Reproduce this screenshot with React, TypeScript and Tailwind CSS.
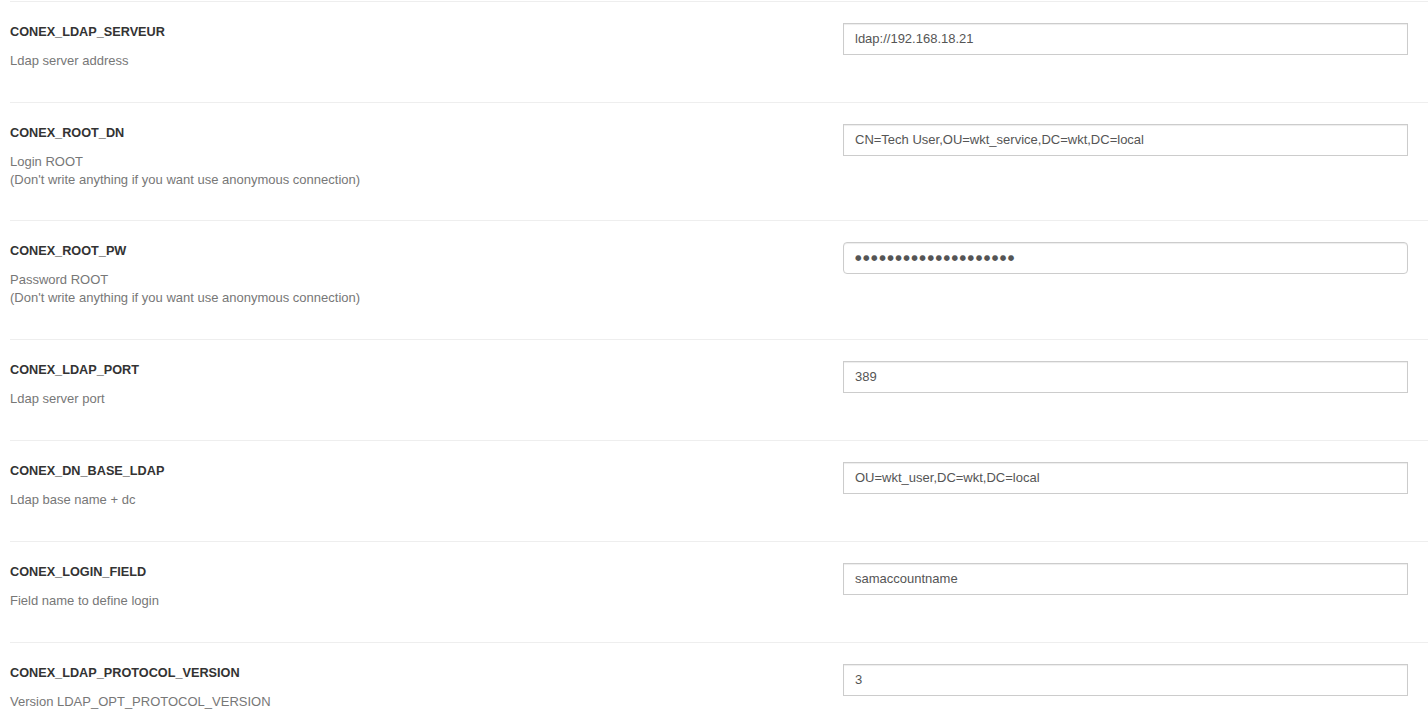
import React from "react";

type Row = {
  name: string;
  desc: string[];
  value: string;
  password?: boolean;
  pb: string;
};

const rows: Row[] = [
  { name: "CONEX_LDAP_SERVEUR", desc: ["Ldap server address"], value: "ldap://192.168.18.21", pb: "pb-[32px]" },
  {
    name: "CONEX_ROOT_DN",
    desc: ["Login ROOT", "(Don't write anything if you want use anonymous connection)"],
    value: "CN=Tech User,OU=wkt_service,DC=wkt,DC=local",
    pb: "pb-[31px]",
  },
  {
    name: "CONEX_ROOT_PW",
    desc: ["Password ROOT", "(Don't write anything if you want use anonymous connection)"],
    value: "●●●●●●●●●●●●●●●●●●●●",
    password: true,
    pb: "pb-[32px]",
  },
  { name: "CONEX_LDAP_PORT", desc: ["Ldap server port"], value: "389", pb: "pb-[32px]" },
  { name: "CONEX_DN_BASE_LDAP", desc: ["Ldap base name + dc"], value: "OU=wkt_user,DC=wkt,DC=local", pb: "pb-[32px]" },
  { name: "CONEX_LOGIN_FIELD", desc: ["Field name to define login"], value: "samaccountname", pb: "pb-[32px]" },
  {
    name: "CONEX_LDAP_PROTOCOL_VERSION",
    desc: ["Version LDAP_OPT_PROTOCOL_VERSION"],
    value: "3",
    pb: "pb-[32px]",
  },
];

export default function App() {
  return (
    <div
      className="w-[1428px] h-[712px] overflow-hidden bg-white pt-px pl-[10px]"
      style={{ fontFamily: '"Liberation Sans", Arial, sans-serif' }}
    >
      {rows.map((r) => (
        <div
          key={r.name}
          className={`grid grid-cols-[833px_1fr] border-t border-[#eeeeee] pt-[20px] ${r.pb}`}
        >
          <div>
            <div className="text-[12.7px] leading-[20px] font-bold text-[#333333]">{r.name}</div>
            <div className="mt-[10px] text-[13px] leading-[18px] text-[#777777]">
              {r.desc.map((d) => (
                <div key={d}>{d}</div>
              ))}
            </div>
          </div>
          <div className="pr-[20px] pt-px">
            <input
              readOnly
              type="text"
              defaultValue={r.value}
              className={`block w-full h-[32px] border border-[#cccccc] bg-white px-[11px] pt-0 pb-[2px] text-[#555555] shadow-[inset_0_1px_1px_rgba(0,0,0,0.075)] outline-none ${
                r.password
                  ? "rounded-[4px] text-[7.5px] tracking-[1.5px]"
                  : "rounded-none text-[13px]"
              }`}
              style={{
                fontFamily: r.password
                  ? '"DejaVu Sans", sans-serif'
                  : '"Liberation Sans", Arial, sans-serif',
              }}
            />
          </div>
        </div>
      ))}
    </div>
  );
}
